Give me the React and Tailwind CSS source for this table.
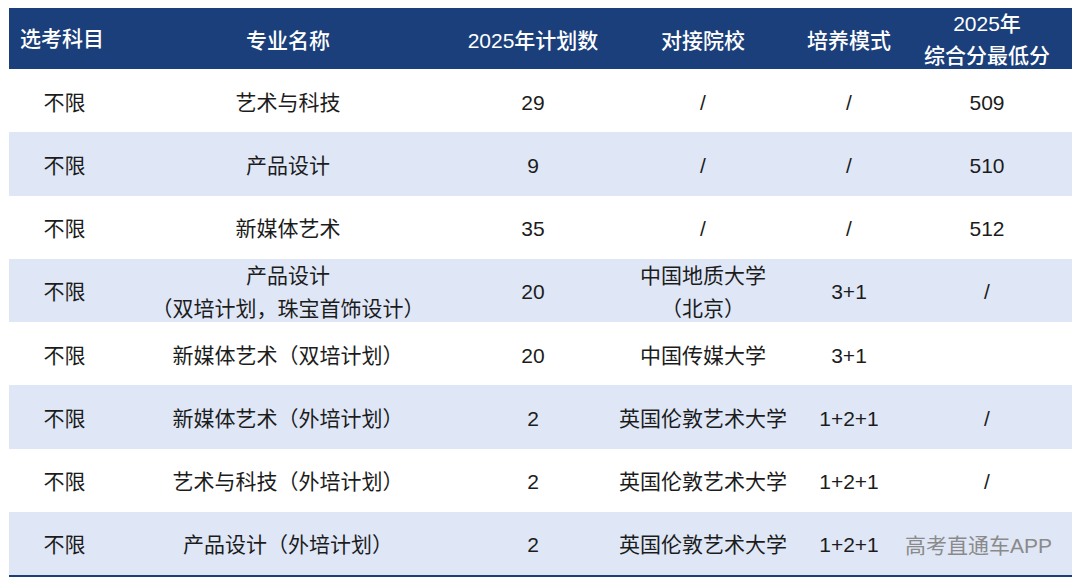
const cols = ['w-[111px]', 'w-[336px]', 'w-[154px]', 'w-[186px]', 'w-[106px]', 'w-[170px]'];

const rows = [
  ['不限', '艺术与科技', '29', '/', '/', '509'],
  ['不限', '产品设计', '9', '/', '/', '510'],
  ['不限', '新媒体艺术', '35', '/', '/', '512'],
  ['不限', ['产品设计', '（双培计划，珠宝首饰设计）'], '20', ['中国地质大学', '（北京）'], '3+1', '/'],
  ['不限', '新媒体艺术（双培计划）', '20', '中国传媒大学', '3+1', ''],
  ['不限', '新媒体艺术（外培计划）', '2', '英国伦敦艺术大学', '1+2+1', '/'],
  ['不限', '艺术与科技（外培计划）', '2', '英国伦敦艺术大学', '1+2+1', '/'],
  ['不限', '产品设计（外培计划）', '2', '英国伦敦艺术大学', '1+2+1', ''],
];

function Cell({ value, className }) {
  const lines = Array.isArray(value) ? value : [value];
  return (
    <div className={`${className} flex flex-col items-center justify-center text-center leading-[33px] pt-[3px]`}>
      {lines.map((l, i) => (
        <span key={i} className="whitespace-nowrap">{l}</span>
      ))}
    </div>
  );
}

export default function App() {
  return (
    <div className="w-[1080px] h-[584px] bg-white pt-[8px] pl-[9px] font-['Liberation_Sans','Noto_Sans_CJK_SC',sans-serif] text-[21px]">
      <div className="relative w-[1063px] border-b-2 border-[#1d3f78]">
        <div className="flex h-[61px] bg-[#1b3f7b] text-white font-medium text-[21px]">
          <div className="w-[111px] flex items-center pl-[11px]">选考科目</div>
          <Cell className={cols[1]} value="专业名称" />
          <Cell className={cols[2]} value="2025年计划数" />
          <Cell className={cols[3]} value="对接院校" />
          <Cell className={cols[4]} value="培养模式" />
          <div className={`${cols[5]} flex flex-col items-center justify-center leading-[32px] pt-[2px]`}>
            <span>2025年</span>
            <span>综合分最低分</span>
          </div>
        </div>
        {rows.map((r, i) => (
          <div key={i} className={`flex h-[63.25px] text-[#1c1c1c] ${i % 2 === 1 ? 'bg-[#dfe7f7]' : 'bg-white'}`}>
            {r.map((v, j) => (
              <Cell key={j} className={cols[j]} value={v} />
            ))}
          </div>
        ))}
        <div className="absolute right-[20px] bottom-[19px] text-[21px] text-[#8a8a8a] leading-none">高考直通车APP</div>
      </div>
    </div>
  );
}
